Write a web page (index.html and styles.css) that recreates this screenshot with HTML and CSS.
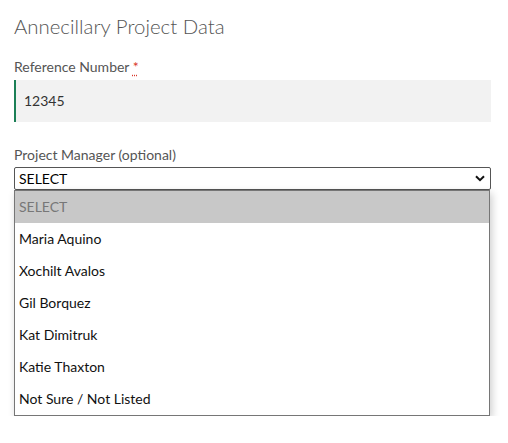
FILE: index.html
```html
<!DOCTYPE html>
<html>
<head>
<meta charset="utf-8">
<link rel="stylesheet" href="styles.css">
</head>
<body>
<div class="page">
  <h1 class="title">Annecillary Project Data</h1>
  <div class="field">
    <label class="label">Reference Number <abbr class="req" title="required">*</abbr></label>
    <div class="input">12345</div>
  </div>
  <div class="field field-select">
    <label class="label">Project Manager (optional)</label>
    <div class="select">
      <span>SELECT</span>
      <svg class="chev" width="10" height="7" viewBox="0 0 10 7"><path d="M1 1.2 L5 5.2 L9 1.2" fill="none" stroke="#111" stroke-width="2"/></svg>
    </div>
    <ul class="menu">
      <li class="opt active">SELECT</li>
      <li class="opt">Maria Aquino</li>
      <li class="opt">Xochilt Avalos</li>
      <li class="opt">Gil Borquez</li>
      <li class="opt">Kat Dimitruk</li>
      <li class="opt">Katie Thaxton</li>
      <li class="opt">Not Sure / Not Listed</li>
    </ul>
  </div>
</div>
</body>
</html>
```
FILE: styles.css
```css
html, body { margin: 0; padding: 0; background: #fff; }
body { font-family: "Lato", "Open Sans", sans-serif; color: #555; }
.page { padding: 12px 17px 0 14px; }
.title { margin: 0; font-weight: 300; font-size: 20.4px; line-height: 28px; color: #555; }
.field { margin-top: 18px; }
.label { display: block; font-size: 14px; line-height: 18px; color: #555; }
.req { color: #d9372b; text-decoration: underline dotted; text-underline-offset: 3px; border: none; }
.input { margin-top: 4px; height: 42px; box-sizing: border-box; background: #f2f2f2; border-left: 2px solid #1b7f56; padding: 0 8px; font-size: 14px; line-height: 42px; color: #333; }
.field-select { margin-top: 24px; position: relative; }
.select { margin-top: 3px; height: 23px; box-sizing: border-box; border: 1px solid #555; border-radius: 2px; background: #fff; display: flex; align-items: center; justify-content: space-between; padding: 0 5px 0 4px; font-size: 14px; color: #000; }
.chev { display: block; }
.menu { list-style: none; margin: 0; padding: 0; border: 1px solid #767676; box-shadow: 2px 3px 8px rgba(0,0,0,0.2); background: #fff; width: 476px; box-sizing: border-box; }
.opt { height: 32px; line-height: 32px; padding-left: 4px; font-size: 14px; color: #111; }
.opt.active { background: #c8c8c8; color: #777; }
```
